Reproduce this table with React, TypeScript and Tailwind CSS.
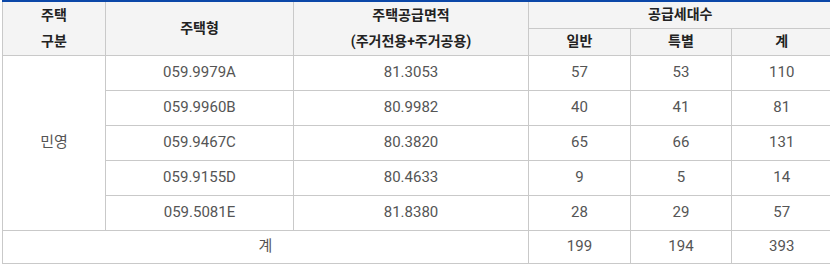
import React from "react";

const rows = [
  ["059.9979A", "81.3053", "57", "53", "110"],
  ["059.9960B", "80.9982", "40", "41", "81"],
  ["059.9467C", "80.3820", "65", "66", "131"],
  ["059.9155D", "80.4633", "9", "5", "14"],
  ["059.5081E", "81.8380", "28", "29", "57"],
];

export default function App() {
  const th = "border border-[#c9c9c9] bg-[#f4f4f4] text-[#222] font-bold text-[14px] text-center align-middle p-0";
  const td = "border border-[#c9c9c9] text-[#555] text-[15px] text-center align-middle p-0 h-[35px]";
  const tdLast = "border border-[#c9c9c9] text-[#555] text-[15px] text-center align-middle p-0 h-[33px]";
  return (
    <div className="w-[830px] h-[269px] bg-white pl-[2px]" style={{ fontFamily: "Roboto, 'Noto Sans CJK KR', sans-serif" }}>
      <table className="border-collapse w-[829px] table-fixed border-t-2 border-t-[#0b47a8]">
        <colgroup>
          <col className="w-[103px]" />
          <col className="w-[188px]" />
          <col className="w-[235px]" />
          <col className="w-[102px]" />
          <col className="w-[101px]" />
          <col className="w-[100px]" />
        </colgroup>
        <thead>
          <tr className="h-[27px]">
            <th rowSpan={2} className={`${th} border-t-0 leading-[26px]`}>주택<br />구분</th>
            <th rowSpan={2} className={`${th} border-t-0`}>주택형</th>
            <th rowSpan={2} className={`${th} border-t-0 leading-[26px]`}>주택공급면적<br />(주거전용+주거공용)</th>
            <th colSpan={3} className={`${th} border-t-0 border-r-0`}>공급세대수</th>
          </tr>
          <tr className="h-[27px]">
            <th className={th}>일반</th>
            <th className={th}>특별</th>
            <th className={`${th} border-r-0`}>계</th>
          </tr>
        </thead>
        <tbody>
          {rows.map((r, i) => (
            <tr key={i}>
              {i === 0 && (
                <td rowSpan={5} className={td}>민영</td>
              )}
              <td className={td}>{r[0]}</td>
              <td className={td}>{r[1]}</td>
              <td className={td}>{r[2]}</td>
              <td className={td}>{r[3]}</td>
              <td className={`${td} border-r-0`}>{r[4]}</td>
            </tr>
          ))}
          <tr>
            <td colSpan={3} className={tdLast}>계</td>
            <td className={tdLast}>199</td>
            <td className={tdLast}>194</td>
            <td className={`${tdLast} border-r-0`}>393</td>
          </tr>
        </tbody>
      </table>
    </div>
  );
}
